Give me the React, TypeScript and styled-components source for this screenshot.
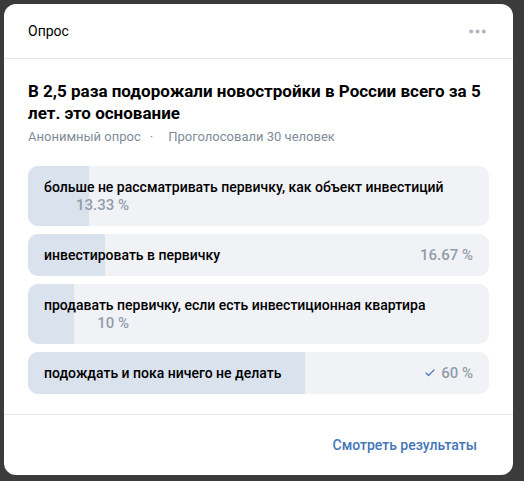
import React from "react";
import styled, { createGlobalStyle } from "styled-components";
import { Check } from "lucide-react";

interface PollOption {
    text: string;
    percent: number;
    label: string;
    wrap?: boolean;
    chosen?: boolean;
}

const options: PollOption[] = [
    { text: "больше не рассматривать первичку, как объект инвестиций", percent: 13.33, label: "13.33 %", wrap: true },
    { text: "инвестировать в первичку", percent: 16.67, label: "16.67 %" },
    { text: "продавать первичку, если есть инвестиционная квартира", percent: 10, label: "10 %", wrap: true },
    { text: "подождать и пока ничего не делать", percent: 60, label: "60 %", chosen: true },
];

const GlobalStyle = createGlobalStyle`
  html, body {
    margin: 0;
    padding: 0;
    background: #3b3b3b;
    font-family: Roboto, "Noto Sans", "Liberation Sans", sans-serif;
  }
`;

const Backdrop = styled.div`
  width: 524px;
  height: 481px;
  box-sizing: border-box;
  padding: 4px 11px 6px 4px;
  background: #3b3b3b;
`;

const Modal = styled.div`
  width: 509px;
  height: 471px;
  background: #fff;
  border-radius: 12px;
  display: flex;
  flex-direction: column;
  overflow: hidden;
`;

const Header = styled.div`
  height: 54px;
  display: flex;
  align-items: center;
  justify-content: space-between;
  padding: 0 27px 0 24px;
  border-bottom: 1px solid #e7e8ec;
  flex-shrink: 0;
`;

const HeaderTitle = styled.span`
  font-size: 14px;
  color: #000;
`;

const Body = styled.div`
  flex: 1;
  padding: 21px 24px 0 24px;
  border-bottom: 1px solid #e7e8ec;
`;

const Title = styled.h2`
  margin: 0;
  font-size: 17px;
  line-height: 22px;
  font-weight: 700;
  color: #000;
`;

const Meta = styled.div`
  margin-top: 4px;
  font-size: 13px;
  line-height: 18px;
  color: #818c99;
`;

const Dot = styled.span`
  margin: 0 15px 0 9px;
`;

const List = styled.div`
  margin-top: 20px;
  display: flex;
  flex-direction: column;
  gap: 8px;
`;

const Option = styled.div`
  position: relative;
  background: #f0f2f5;
  border-radius: 10px;
  overflow: hidden;
  padding: 12px 16px;
`;

const Fill = styled.div`
  position: absolute;
  left: 0;
  top: 0;
  bottom: 0;
  background: #dae2ed;
`;

const Row = styled.div<{ $wrap?: boolean }>`
  position: relative;
  display: flex;
  flex-direction: ${(p) => (p.$wrap ? "column" : "row")};
  justify-content: space-between;
  align-items: ${(p) => (p.$wrap ? "flex-start" : "center")};
  line-height: 18px;
`;

const OptionText = styled.span`
  font-size: 14px;
  font-weight: 500;
  color: #000;
`;

const Percent = styled.span<{ $wrap?: boolean }>`
  display: flex;
  align-items: center;
  justify-content: flex-end;
  gap: 5px;
  font-size: 15px;
  font-weight: 500;
  color: #939cab;
  width: ${(p) => (p.$wrap ? "85px" : "auto")};
`;

const Footer = styled.div`
  height: 60px;
  display: flex;
  align-items: center;
  justify-content: flex-end;
  padding-right: 36px;
  flex-shrink: 0;
`;

const ResultsLink = styled.span`
  font-size: 14px;
  font-weight: 500;
  color: #4476ba;
`;

const MoreIcon = () => (
    <svg width="17" height="5" viewBox="0 0 17 5">
        <circle cx="2.2" cy="2.5" r="2" fill="#aeb7c2" />
        <circle cx="8.5" cy="2.5" r="2" fill="#aeb7c2" />
        <circle cx="14.8" cy="2.5" r="2" fill="#aeb7c2" />
    </svg>
);

const App = () => {
    return (
        <>
            <GlobalStyle />
            <Backdrop>
                <Modal>
                    <Header>
                        <HeaderTitle>Опрос</HeaderTitle>
                        <MoreIcon />
                    </Header>
                    <Body>
                        <Title>В 2,5 раза подорожали новостройки в России всего за 5 лет. это основание</Title>
                        <Meta>
                            Анонимный опрос<Dot>·</Dot>Проголосовали 30 человек
                        </Meta>
                        <List>
                            {options.map((o) => (
                                <Option key={o.text}>
                                    <Fill style={{ width: `${o.percent}%` }} />
                                    <Row $wrap={o.wrap}>
                                        <OptionText>{o.text}</OptionText>
                                        <Percent $wrap={o.wrap}>
                                            {o.chosen && <Check size={12} strokeWidth={2.5} color="#4a7ebf" />}
                                            {o.label}
                                        </Percent>
                                    </Row>
                                </Option>
                            ))}
                        </List>
                    </Body>
                    <Footer>
                        <ResultsLink>Смотреть результаты</ResultsLink>
                    </Footer>
                </Modal>
            </Backdrop>
        </>
    );
};

export default App;
